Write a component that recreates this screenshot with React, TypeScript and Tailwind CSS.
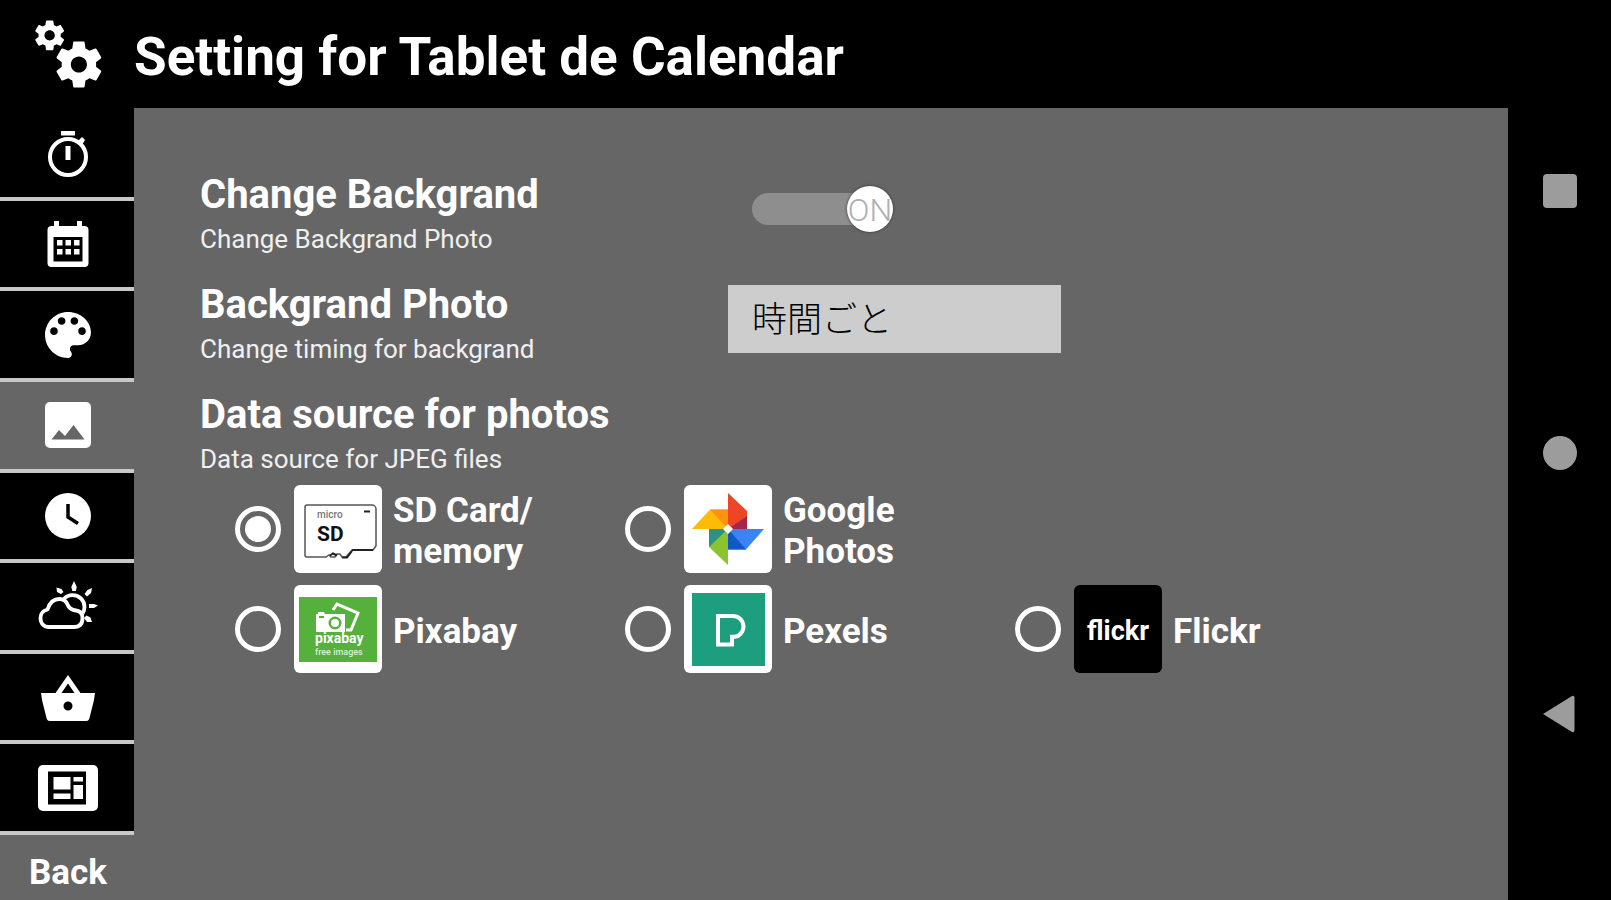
import { useState } from "react";
import type { ReactNode } from "react";

type Tab = {
  id: string;
  label: string;
  icon: ReactNode;
};

type Source = {
  id: string;
  label: string;
  startsRow?: boolean;
  logo: ReactNode;
};

const GEAR =
  "M19.43 12.98c.04-.32.07-.64.07-.98s-.03-.66-.07-.98l2.11-1.65c.19-.15.24-.42.12-.64l-2-3.46c-.12-.22-.39-.3-.61-.22l-2.49 1c-.52-.4-1.08-.73-1.69-.98l-.38-2.65C14.46 2.18 14.25 2 14 2h-4c-.25 0-.46.18-.49.42l-.38 2.65c-.61.25-1.17.59-1.69.98l-2.49-1c-.23-.09-.49 0-.61.22l-2 3.46c-.13.22-.07.49.12.64l2.11 1.65c-.04.32-.07.65-.07.98s.03.66.07.98l-2.11 1.65c-.19.15-.24.42-.12.64l2 3.46c.12.22.39.3.61.22l2.49-1c.52.4 1.08.73 1.69.98l.38 2.65c.03.24.24.42.49.42h4c.25 0 .46-.18.49-.42l.38-2.65c.61-.25 1.17-.59 1.69-.98l2.49 1c.23.09.49 0 .61-.22l2-3.46c.12-.22.07-.49-.12-.64l-2.11-1.65zM12 15.5c-1.93 0-3.5-1.57-3.5-3.5s1.57-3.5 3.5-3.5 3.5 1.57 3.5 3.5-1.57 3.5-3.5 3.5z";

function TabIcon({ children }: { children: ReactNode }) {
  return (
    <svg viewBox="0 0 64 64" className="h-16 w-16" fill="white" aria-hidden="true">
      {children}
    </svg>
  );
}

const tabs: Tab[] = [
  {
    id: "timer",
    label: "Timer",
    icon: (
      <TabIcon>
        <circle cx="32" cy="36" r="18" fill="none" stroke="white" strokeWidth="4" />
        <path d="M25 10h14v4.5H25zM29.5 25h5v14h-5z" />
        <path d="M42 20l4-4 3 3-3 5z" />
      </TabIcon>
    ),
  },
  {
    id: "calendar",
    label: "Calendar",
    icon: (
      <TabIcon>
        <path fillRule="evenodd" d="M18 9h5v5h18V9h5v5h2.5a4 4 0 0 1 4 4v33a4 4 0 0 1-4 4h-33a4 4 0 0 1-4-4V18a4 4 0 0 1 4-4H18zM17.5 25v24.5h29V25z" />
        <path d="M21 28h5.5v5.5H21zM29.5 28H35v5.5h-5.5zM38 28h5.5v5.5H38zM21 37h5.5v5.5H21zM29.5 37H35v5.5h-5.5zM38 37h5.5v5.5H38z" />
      </TabIcon>
    ),
  },
  {
    id: "theme",
    label: "Theme",
    icon: (
      <TabIcon>
        <g transform="translate(1.4 1.4) scale(2.55)">
          <path d="M12 3c-4.97 0-9 4.03-9 9s4.03 9 9 9c.83 0 1.5-.67 1.5-1.5 0-.39-.15-.74-.39-1.01-.23-.26-.38-.61-.38-.99 0-.83.67-1.5 1.5-1.5H16c2.76 0 5-2.24 5-5 0-4.42-4.03-8-9-8zm-5.5 9c-.83 0-1.5-.67-1.5-1.5S5.67 9 6.5 9 8 9.67 8 10.5 7.33 12 6.500 12zm3-4C8.67 8 8 7.33 8 6.5S8.67 5 9.500 5s1.5.67 1.5 1.500S10.33 8 9.500 8zm5 0c-.83 0-1.500-.67-1.500-1.500S13.670 5 14.500 5s1.500.67 1.500 1.500S15.330 8 14.500 8zm3 4c-.83 0-1.500-.67-1.500-1.500S16.670 9 17.500 9s1.500.67 1.500 1.500-.67 1.500-1.500 1.500z" />
        </g>
      </TabIcon>
    ),
  },
  {
    id: "photo",
    label: "Photo",
    icon: (
      <TabIcon>
        <rect x="9" y="9" width="46" height="46" rx="5" />
        <path d="M15.5 46.5l7.5-9.5 6 6 8.5-11 11 14.5z" fill="#666666" />
      </TabIcon>
    ),
  },
  {
    id: "clock",
    label: "Clock",
    icon: (
      <TabIcon>
        <circle cx="32" cy="32" r="23" />
        <path d="M32 20v13l10 6.5" fill="none" stroke="black" strokeWidth="3.5" />
      </TabIcon>
    ),
  },
  {
    id: "weather",
    label: "Weather",
    icon: (
      <TabIcon>
        <g fill="none" stroke="white" strokeWidth="3.8" strokeLinejoin="round" strokeLinecap="round">
          <path d="M13 53C8 53 4.5 49.500 4.500 44c0-4.500 3-7.500 7-8.500C13.500 29 18 25 23.500 25c4 0 6.500 2 8 5.500 1.500 4 4.500 5.500 8.500 6 4.500.5 6.500 3 6.500 7.500 0 6-3 9-8.500 9z" />
          <path d="M28 25c2-2.500 5-3.800 8.500-3.800 7 0 12 5 12 11.800 0 3-.5 4.500-2 6.500" />
        </g>
        <path d="M38 7l2.800 6-1 4h-3.500l-1-4zM56 14l-1 5-4 3.500-2.500-2.500 3-4zM62 31.500l-4 2.500h-5v-4h5zM56 48l-5 0-3-4 2.500-2.500 4 2zM20.500 13.500l5 1.500 2 3-2.500 2-4-2z" />
      </TabIcon>
    ),
  },
  {
    id: "shop",
    label: "Shop",
    icon: (
      <TabIcon>
        <path fillRule="evenodd" d="M32 10l12.500 18H59l-1 7-4.500 18c-.5 2-1.500 3-3 3h-37c-1.500 0-2.500-1-3-3L6 35l-1-7h14.500zM32 18.500L25.500 28h13zM32 36.500a4.500 4.500 0 1 0 0 9 4.500 4.500 0 1 0 0-9z" />
      </TabIcon>
    ),
  },
  {
    id: "layout",
    label: "Layout",
    icon: (
      <TabIcon>
        <rect x="2" y="9" width="60" height="46" rx="5" />
        <path d="M12 15.5h38v33H12z" fill="black" />
        <path d="M17.5 21h17v12.5h-17zM17.5 37.5h17V43h-17zM37.5 21H47v4.5h-9.500zM37.500 29H47v14h-9.500z" />
      </TabIcon>
    ),
  },
];

const sources: Source[] = [
  {
    id: "sd",
    label: "SD Card/ memory",
    logo: (
      <svg viewBox="0 0 88 88" className="h-full w-full" aria-hidden="true">
        <path d="M13 20h65a4 4 0 0 1 4 4v37l-3 4H58l-6 7h-4l-2-3h-3l-2 3h-4l-2-2-3 2H13a2 2 0 0 1-2-2V22a2 2 0 0 1 2-2z" fill="white" stroke="#555555" strokeWidth="1.5" />
        <path d="M70 26.500h6M58 65h21M48 72.500h5l5-6.500M36 70.500l3-2 4 2" fill="none" stroke="#222222" strokeWidth="2" />
        <text x="23" y="33" fontSize="10" fontWeight="500" fill="#777777">micro</text>
        <text x="23" y="56" fontSize="21" fontWeight="700" fill="#111111">SD</text>
      </svg>
    ),
  },
  {
    id: "google",
    label: "Google Photos",
    logo: (
      <svg viewBox="0 0 88 88" className="h-full w-full" aria-hidden="true">
        <path d="M44 44V8l19 18v18z" fill="#ee4524" />
        <path d="M44 44l19-13v13z" fill="#a3274a" />
        <path d="M44 44h36L62 64.5H44z" fill="#3a83f7" />
        <path d="M44 44l18 20.5H44z" fill="#1258c4" />
        <path d="M44 44v36L25 62V44z" fill="#8bc42f" />
        <path d="M25 44h19L25 62z" fill="#2a9484" />
        <path d="M44 44H8l18-19.5h18z" fill="#fcbc05" />
        <path d="M26 24.5h18V44z" fill="#fb9212" />
        <path d="M44 39l5 5-5 5-5-5z" fill="white" />
      </svg>
    ),
  },
  {
    id: "pixabay",
    label: "Pixabay",
    startsRow: true,
    logo: (
      <svg viewBox="0 0 88 88" className="h-full w-full" aria-hidden="true">
        <path d="M5 12h78v65H5z" fill="#55b13b" />
        <path d="M39 25l4-6 21 9-7 17h-5" fill="none" stroke="white" strokeWidth="3" />
        <path fillRule="evenodd" d="M24 27h6l1 2h20v18H22V29h2zM41 31.500a6.500 6.500 0 1 0 0 13 6.500 6.500 0 1 0 0-13z" fill="white" />
        <circle cx="41" cy="38" r="4" fill="white" />
        <path d="M25 32h5" stroke="#55b13b" strokeWidth="2" />
        <text x="21" y="58" fontSize="14" fill="white">pixabay</text>
        <text x="21" y="70" fontSize="9" fontWeight="500" fill="#d9efd2">free images</text>
      </svg>
    ),
  },
  {
    id: "pexels",
    label: "Pexels",
    logo: (
      <svg viewBox="0 0 88 88" className="h-full w-full" aria-hidden="true">
        <path d="M8 8h73v73H8z" fill="#1d9f7f" />
        <path d="M34 31h15a10.500 10.500 0 0 1 2 20.800h-3v7.700H34z" fill="none" stroke="white" strokeWidth="4" />
      </svg>
    ),
  },
  {
    id: "flickr",
    label: "Flickr",
    logo: (
      <span className="flex h-full w-full items-center justify-center bg-black pt-1 text-[27px] leading-none font-bold text-white" aria-hidden="true">
        flickr
      </span>
    ),
  },
];

function SettingText({ title, note, htmlFor }: { title: string; note: string; htmlFor?: string }) {
  return (
    <div>
      <h2 className="text-[40px] leading-12 font-bold">
        {htmlFor ? <label htmlFor={htmlFor}>{title}</label> : title}
      </h2>
      <p className="mt-0.5 text-[26px] leading-9 text-[#f0f0f0]">{note}</p>
    </div>
  );
}

export default function App() {
  const [tab, setTab] = useState("photo");
  const [enabled, setEnabled] = useState(true);
  const [source, setSource] = useState("sd");

  return (
    <div className="flex min-h-screen bg-black font-[Roboto,'Noto_Sans_CJK_JP',sans-serif] text-white">
      <div className="flex min-w-0 flex-1 flex-col">
        <header className="flex h-[108px] items-center">
          <div className="flex w-[134px] shrink-0 justify-center">
            <svg viewBox="0 0 72 76" className="h-[76px] w-[72px]" fill="white" aria-hidden="true">
              <path d={GEAR} transform="translate(.9 1.6) scale(1.48)" />
              <path d={GEAR} transform="translate(20.3 20.9) scale(2.3)" />
            </svg>
          </div>
          <h1 className="pt-1.5 text-[53px] leading-none font-bold">Setting for Tablet de Calendar</h1>
        </header>

        <div className="flex flex-1">
          <nav className="flex w-[134px] shrink-0 flex-col pt-0.5">
            {tabs.map((t) => (
              <button
                key={t.id}
                type="button"
                aria-label={t.label}
                onClick={() => setTab(t.id)}
                className={`flex flex-1 items-center justify-center border-b-4 border-[#c8c8c8] pl-0.5 ${tab === t.id ? "bg-[#666666]" : "bg-black"}`}
              >
                {t.icon}
              </button>
            ))}
            <button type="button" className="h-[65px] bg-[#666666] pt-2.5 pl-0.5 text-[35px] leading-none font-bold">
              Back
            </button>
          </nav>

          <main className="flex-1 bg-[#666666] pt-[63px] pl-[66px]">
            <div className="flex flex-col gap-6">
              <section className="grid grid-cols-[528px_1fr]">
                <SettingText title="Change Backgrand" note="Change Backgrand Photo" htmlFor="change-background" />
                <div className="flex h-[75px] items-center pl-6">
                  <button
                    id="change-background"
                    type="button"
                    role="switch"
                    aria-checked={enabled}
                    onClick={() => setEnabled(!enabled)}
                    className={`flex h-8 w-[141px] items-center rounded-full bg-[#8e8e8e] ${enabled ? "justify-end" : "justify-start"}`}
                  >
                    <span className="flex h-[46px] w-[46px] items-center justify-center rounded-full bg-white pt-0.5 text-[32px] leading-none font-light text-[#b0b0b0] shadow-[0_0_3px_#333333]">
                      {enabled ? "ON" : "OFF"}
                    </span>
                  </button>
                </div>
              </section>

              <section className="grid grid-cols-[528px_1fr]">
                <SettingText title="Backgrand Photo" note="Change timing for backgrand" htmlFor="timing" />
                <div className="flex h-[75px] items-center">
                  <select
                    id="timing"
                    className="h-[68px] w-[333px] appearance-none bg-[#cdcdcd] px-6 pt-1.5 text-[35px] font-light text-black"
                  >
                    <option>時間ごと</option>
                  </select>
                </div>
              </section>

              <section>
                <SettingText title="Data source for photos" note="Data source for JPEG files" />
                <div className="mt-2 grid grid-cols-[repeat(3,390px)] gap-y-3 pl-[35px]">
                  {sources.map((s) => (
                    <label
                      key={s.id}
                      className={`flex items-center text-[35px] leading-[41px] font-bold ${s.startsRow ? "col-start-1" : ""}`}
                    >
                      <input
                        type="radio"
                        name="source"
                        value={s.id}
                        checked={source === s.id}
                        onChange={() => setSource(s.id)}
                        className="h-[46px] w-[46px] shrink-0 appearance-none rounded-full border-[5px] border-white p-[5px] checked:bg-white checked:bg-clip-content"
                      />
                      <span className="ml-[13px] h-[88px] w-[88px] shrink-0 overflow-hidden rounded-md bg-white">
                        {s.logo}
                      </span>
                      <span className="ml-[11px] max-w-[150px] pt-1">{s.label}</span>
                    </label>
                  ))}
                </div>
              </section>
            </div>
          </main>
        </div>
      </div>

      <aside className="flex w-[103px] shrink-0 flex-col items-center justify-center gap-[228px] pt-[5px]">
        <button type="button" aria-label="Recent apps" className="h-[34px] w-[34px] rounded-sm bg-[#9c9c9c]" />
        <button type="button" aria-label="Home" className="h-[34px] w-[34px] rounded-full bg-[#9c9c9c]" />
        <button type="button" aria-label="Go back" className="h-[34px] w-[34px]">
          <svg viewBox="0 0 34 34" className="h-full w-full overflow-visible" fill="#9c9c9c">
            <path d="M0 16L29-2q2.500-1 2.500 2v32q0 3-2.500 2z" />
          </svg>
        </button>
      </aside>
    </div>
  );
}
